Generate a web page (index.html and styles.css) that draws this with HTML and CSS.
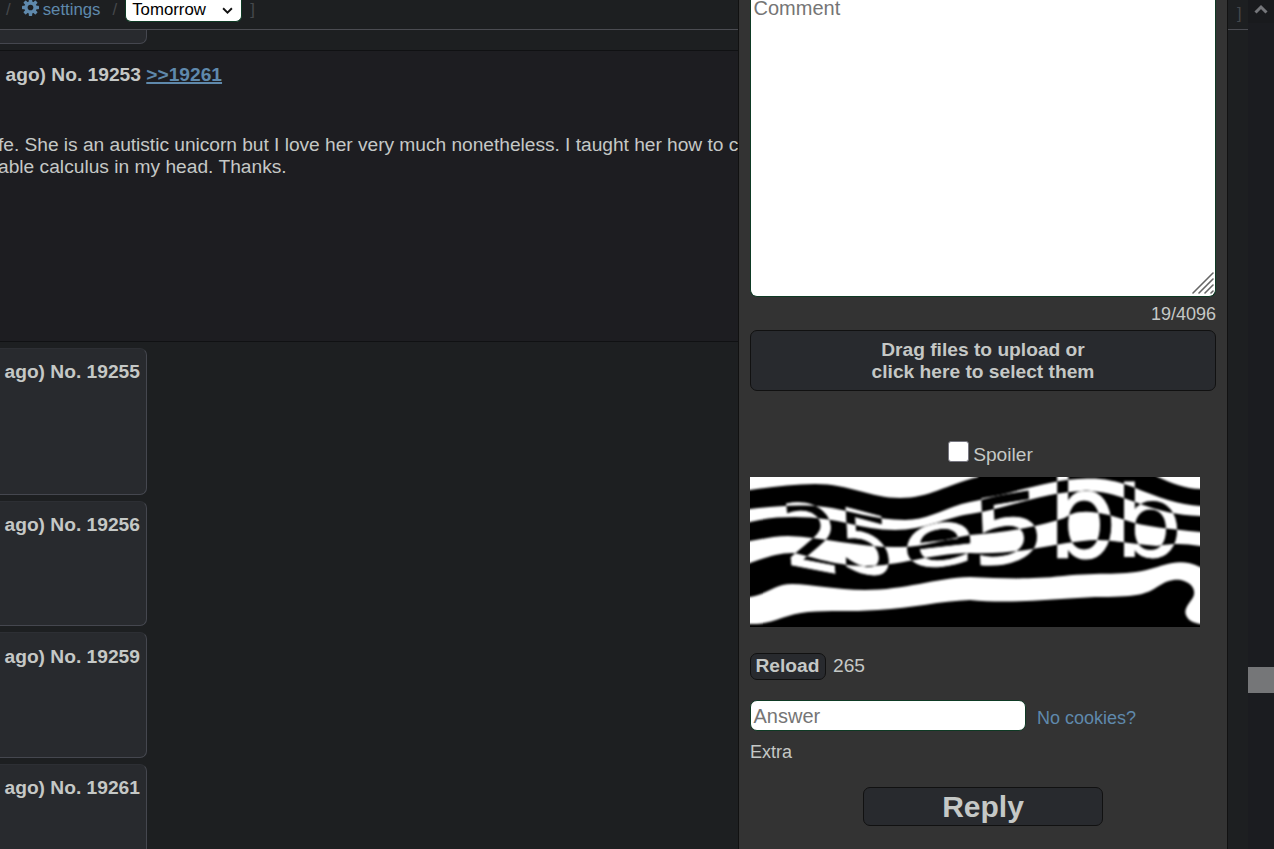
FILE: index.html
```html
<!DOCTYPE html>
<html lang="en">
<head>
<meta charset="utf-8">
<title>Thread</title>
<link rel="stylesheet" href="styles.css">
</head>
<body>
<div class="app">
  <main class="thread">
    <nav class="topbar">
      <span class="sep">/</span>
      <a class="settings"><svg class="gear" viewBox="0 0 18 18"><g fill="#5f89ac"><circle cx="9" cy="9" r="6.6"/><g id="t"><rect x="7.2" y="0" width="3.6" height="18" rx=".7"/><rect x="0" y="7.2" width="18" height="3.6" rx=".7"/></g><use href="#t" transform="rotate(45 9 9)"/></g><circle cx="9" cy="9" r="3" fill="#1d1f21"/></svg>settings</a>
      <span class="sep">/</span>
      <span class="select">Tomorrow<svg class="chev" viewBox="0 0 10 7"><path d="M1 1l4 4 4-4" fill="none" stroke="#111" stroke-width="1.7"/></svg></span>
      <span class="sep">]</span>
    </nav>
    <article class="card tail"></article>
    <article class="op">
      <h2>ago) No. 19253 <a class="ref">&gt;&gt;19261</a></h2>
      <p><span class="tight">fe. She is an autistic unicorn but I love her very much nonetheless. I taught her how to c</span><br>able calculus in my head. Thanks.</p>
    </article>
    <article class="card c1"><h2>ago) No. 19255</h2></article>
    <article class="card c2"><h2>ago) No. 19256</h2></article>
    <article class="card c3"><h2>ago) No. 19259</h2></article>
    <article class="card c4"><h2>ago) No. 19261</h2></article>
  </main>
  <form class="panel">
    <div class="comment">Comment<svg class="grip" viewBox="0 0 22 22"><path d="M1 21L21 1M7 21L21 7M13 21L21 13M19 21l2-2" stroke="#666" stroke-width="1.6" stroke-linecap="round"/></svg></div>
    <div class="count">19/4096</div>
    <div class="btn drop">Drag files to upload or<br>click here to select them</div>
    <label class="spoiler"><span class="box"></span>Spoiler</label>
    <svg class="captcha" viewBox="0 0 450 150">
      <g class="soft">
      <rect x="-10" y="-10" width="470" height="170" fill="#fff"/>
      <path d="M-9 14L0 13C22 10 43 7 65 7C100 7 120 21 150 21C180 21 195 8 228 0V-9H395L408 0C421 6 436 12 450 12L460 12V30L450 29C430 28 407 20 383 10C365 3 350 1 337 1.500C300 2 265 16 220 25C198 29 180 43 155 43C125 43 98 33 75 30C50 27 28 29 0 32L-9 34Z"/>
      <path d="M-9 48L0 45C15 41 30 40 45 40C90 40 110 53 145 53C175 53 194 41 220 37C260 31 295 14 337 14C375 14 395 37 450 39H460V56L450 55C420 52 395 50 375 43C360 38 345 34 333 35C319 35 319 41 308 43C275 53 245 56 220 58C195 62 175 70 150 70C110 71 75 60 38 59C25 59 12 62 0 64L-9 66Z"/>
      <path d="M-9 90L0 86C14 81 28 76 42 76C55 77 83 89 115 89C150 89 177 77 220 76C270 78 300 67 333 64C355 61 370 66 407 69C425 66 435 67 450 69H460V94L450 90C430 80 415 88 400 92C375 99 350 95 313 99C275 103 250 101 220 100C185 101 155 113 115 113C85 113 62 107 42 107C25 107 18 117 0 120H-9Z"/>
      <path d="M-9 148L0 147C22 148 35 137 58 135C80 133 100 135 128 133C163 131 190 124 220 123C260 127 300 122 345 120C385 120 395 118 407 110C417 103 427 101 434 104C443 107 447 115 442 122C437 129 433 134 437 140C440 145 445 147 460 148V160H-9Z"/>
      <g class="glyphs">
        <text transform="matrix(.93 .18 .08 .88 35 86.500)">2</text>
        <text transform="matrix(.9 .24 .05 .84 90 89)">5</text>
        <text transform="matrix(1.22 -.14 0 .76 151 93)">e</text>
        <text transform="matrix(1.19 -.2 .04 .92 222 91)">5</text>
        <text transform="matrix(1.08 0 0 1.18 298 81)">b</text>
        <text transform="matrix(1.06 0 0 .98 365 80)">b</text>
      </g>
      </g>
    </svg>
    <div class="reload"><span class="btn small">Reload</span><span>265</span></div>
    <div class="answer"><span class="field">Answer</span><a>No cookies?</a></div>
    <div class="extra">Extra</div>
    <div class="btn reply">Reply</div>
  </form>
  <aside class="edge"><span class="sep">]</span></aside>
  <aside class="scroll"><div class="up"><svg viewBox="0 0 14 10"><path d="M1.500 8.500L7 3l5.500 5.500" fill="none" stroke="#75767a" stroke-width="3"/></svg></div><div class="thumb"></div></aside>
</div>
</body>
</html>
```
FILE: styles.css
```css
* { box-sizing: border-box; }
body { margin: 0; background: #1d1f21; color: #c5c8c6; font: 19.2px/22px "Liberation Sans", Arial, sans-serif; overflow: hidden; }
.app { display: grid; grid-template-columns: 738px 490px 20px 26px; width: 1274px; height: 849px; overflow: hidden; }
.thread { overflow: hidden; min-width: 0; display: flex; flex-direction: column; height: 849px; }
.topbar { flex: none; height: 30px; border-bottom: 1px solid #4b4c52; display: flex; align-items: flex-start; font-size: 16.8px; line-height: 19px; padding-left: 6px; white-space: nowrap; }
.sep { color: #45484c; }
.settings { display: flex; color: #5f89ac; margin: 0 12px 0 11px; }
.gear { width: 17px; height: 17px; margin: -1px 4px 0 0; }
.select { display: flex; justify-content: space-between; align-items: flex-start; width: 117px; height: 22px; margin: 0 8px; padding: 0 8px 0 6px; background: #fff; border: 1px solid #0e3a24; border-top: 0; border-radius: 0 0 6px 6px; color: #000; }
.chev { width: 11px; height: 8px; margin-top: 7px; }
.card { flex: none; width: 147px; background: #282a2e; border: 1px solid #45474f; border-top-color: #2d2f34; border-left: 0; border-radius: 0 7px 7px 0; margin-bottom: 6px; padding: 12px 0 0 4.500px; }
h2 { margin: 0; font-size: 19.2px; line-height: 22px; white-space: nowrap; }
.tail { height: 14px; border-top: 0; border-radius: 0 0 7px 0; padding: 0; }
.op { flex: none; height: 292px; background: #1d1d21; border: solid #101113; border-width: 1px 0; margin-bottom: 6px; padding: 13px 0 0; }
.op h2 { padding-left: 5.5px; }
.op p { margin: 48px 0 0 -2px; white-space: nowrap; }
.tight { letter-spacing: -.035px; }
.ref { color: #5f89ac; text-decoration: underline; text-decoration-thickness: 2px; }
.c1 { height: 147px; }
.c2 { height: 125px; }
.c3 { height: 126px; padding-top: 13px; }
.c4 { height: 120px; }
.panel { height: 849px; background: #333; border: solid #111; border-width: 0 1px; padding: 0 11px; display: flex; flex-direction: column; }
.comment { position: relative; flex: none; height: 297px; background: #fff; border: 1px solid #0e3a24; border-top: 0; border-radius: 0 0 7px 7px; color: #757575; font-size: 20px; line-height: 16px; padding-left: 2.5px; }
.grip { position: absolute; right: 1px; bottom: 2px; width: 22px; height: 22px; }
.count { text-align: right; font-size: 18px; line-height: 22px; margin-top: 6px; height: 27px; }
.btn { background: #282a2e; border: 1px solid #111; border-radius: 7px; font-weight: bold; text-align: center; }
.drop { height: 61px; padding-top: 8px; }
.spoiler { display: flex; justify-content: center; gap: 4px; margin-top: 50px; height: 36px; padding: 0 0 0 15px; line-height: 27px; }
.box { width: 21px; height: 21px; background: #fff; border: 1px solid #767680; border-radius: 3px; }
.captcha { flex: none; width: 450px; height: 150px; overflow: hidden; }
.soft { filter: blur(.9px); isolation: isolate; }
.glyphs { fill: #fff; stroke: #fff; stroke-width: 1; font: 100px "DejaVu Sans", sans-serif; mix-blend-mode: difference; }
.reload { display: flex; gap: 7px; margin-top: 26px; height: 27px; line-height: 26px; }
.small { width: 76px; line-height: 24px; padding-right: 1px; }
.answer { display: flex; margin-top: 20px; height: 31px; gap: 11px; line-height: 36px; font-size: 18px; }
.field { width: 276px; background: #fff; border: 1px solid #0e3a24; border-radius: 7px; color: #757575; font-size: 20px; line-height: 30px; padding-left: 2.5px; }
.answer a { color: #5f89ac; }
.extra { font-size: 18px; margin-top: 10px; height: 22px; }
.reply { width: 240px; height: 39px; margin: 24px 0 0 113px; font-size: 30px; line-height: 37px; }
.edge { height: 30px; border-bottom: 1px solid #4b4c52; font-size: 16.5px; line-height: 26px; padding-left: 9px; }
.scroll { background: #1b1c20; height: 849px; }
.up { height: 23px; background: #191a1d; margin-bottom: 644px; padding: 4px 6px; }
.up svg { display: block; width: 14px; height: 10px; }
.thumb { height: 26px; background: #757678; }
```
